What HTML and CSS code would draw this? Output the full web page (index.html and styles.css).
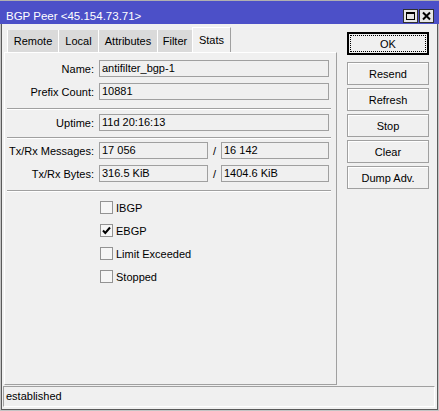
FILE: index.html
```html
<!DOCTYPE html>
<html>
<head>
<meta charset="utf-8">
<link rel="stylesheet" href="styles.css">
</head>
<body>
<div class="window">
  <div class="titlebar">
    <span class="title">BGP Peer &lt;45.154.73.71&gt;</span>
    <div class="tb-buttons">
      <span class="tb-btn"><svg width="13" height="12" viewBox="0 0 13 12"><rect x="2.5" y="2.5" width="8" height="7" fill="none" stroke="#000" stroke-width="1"/><rect x="2" y="2" width="9" height="2" fill="#000"/></svg></span>
      <span class="tb-btn"><svg width="13" height="12" viewBox="0 0 13 12"><path d="M3 2.5 L10 9.5 M10 2.5 L3 9.5" stroke="#000" stroke-width="2"/></svg></span>
    </div>
  </div>
  <div class="frame">
    <div class="content">
      <div class="main">
        <div class="tabs">
          <div class="tab tab-remote">Remote</div>
          <div class="tab tab-local">Local</div>
          <div class="tab tab-attr">Attributes</div>
          <div class="tab tab-filter">Filter</div>
          <div class="tab tab-active">Stats</div>
        </div>
        <div class="panel">
          <div class="row">
            <span class="lbl">Name:</span>
            <div class="field">antifilter_bgp-1</div>
          </div>
          <div class="row">
            <span class="lbl">Prefix Count:</span>
            <div class="field">10881</div>
          </div>
          <div class="sep"></div>
          <div class="row row-after-sep">
            <span class="lbl">Uptime:</span>
            <div class="field">11d 20:16:13</div>
          </div>
          <div class="sep sep-2"></div>
          <div class="row row-after-sep2">
            <span class="lbl">Tx/Rx Messages:</span>
            <div class="field field-a">17 056</div>
            <span class="slash">/</span>
            <div class="field field-b">16 142</div>
          </div>
          <div class="row">
            <span class="lbl">Tx/Rx Bytes:</span>
            <div class="field field-a">316.5 KiB</div>
            <span class="slash">/</span>
            <div class="field field-b">1404.6 KiB</div>
          </div>
          <div class="sep sep-3"></div>
          <div class="checks">
            <div class="check"><span class="box"></span>IBGP</div>
            <div class="check"><span class="box"><svg width="11" height="11" viewBox="0 0 11 11"><path d="M2 5.5 L4.3 8 L9 2.5" fill="none" stroke="#000" stroke-width="2"/></svg></span>EBGP</div>
            <div class="check"><span class="box"></span>Limit Exceeded</div>
            <div class="check"><span class="box"></span>Stopped</div>
          </div>
        </div>
      </div>
      <div class="side">
        <button class="btn btn-default"><span class="focus">OK</span></button>
        <button class="btn btn-first">Resend</button>
        <button class="btn">Refresh</button>
        <button class="btn">Stop</button>
        <button class="btn">Clear</button>
        <button class="btn">Dump Adv.</button>
      </div>
    </div>
    <div class="status">established</div>
  </div>
</div>
</body>
</html>
```
FILE: styles.css
```css
* { box-sizing: border-box; }
html, body {
  margin: 0;
  padding: 0;
  background: #f0f0f0;
}
body {
  font-family: "Liberation Sans", Arial, sans-serif;
  font-size: 11px;
  color: #000;
}
.window {
  width: 439px;
  height: 411px;
  display: flex;
  flex-direction: column;
  background: #f0f0f0;
}
.titlebar {
  height: 24px;
  flex: none;
  background: #4c50c8;
  border-top: 1px solid #b0b0b0;
  padding: 6px 5px 0 6px;
  display: flex;
  align-items: center;
  justify-content: space-between;
}
.title {
  color: #fff;
  font-size: 11.5px;
}
.tb-buttons {
  display: flex;
  gap: 1px;
}
.tb-btn {
  width: 15px;
  height: 14px;
  background: #e6e6e6;
  border: 1px solid #303030;
  display: flex;
  align-items: center;
  justify-content: center;
}
.tb-btn svg { display: block; }
.frame {
  flex: 1;
  border: 1px solid #c4c4c4;
  border-top: 0;
  box-shadow: inset 1px 0 #5a5a5a, inset -1px 0 #5a5a5a, inset 0 -1px #5a5a5a;
  padding: 3px 3px 3px 3px;
  display: flex;
  flex-direction: column;
}
.content {
  display: flex;
}
.main {
  width: 333px;
}
.tabs {
  height: 25px;
  display: flex;
  align-items: flex-end;
  padding-left: 3px;
}
.tab {
  height: 22px;
  line-height: 23px;
  border-left: 1px solid #fff;
  background: #dadada;
  text-align: center;
}
.tab-remote { width: 51px; }
.tab-local { width: 40px; }
.tab-attr { width: 59px; }
.tab-filter { width: 35px; }
.tab-active {
  width: 39px;
  height: 25px;
  line-height: 24px;
  background: #f0f0f0;
  border-top: 1px solid #fff;
  border-right: 1px solid #a0a0a0;
}
.panel {
  height: 333px;
  border-top: 1px solid #fff;
  border-left: 1px solid #fff;
  border-right: 1px solid #a0a0a0;
  border-bottom: 1px solid #a0a0a0;
  padding-top: 7px;
}
.row {
  display: flex;
  align-items: center;
  height: 17px;
}
.row + .row { margin-top: 6px; }
.row-after-sep { margin-top: 4px; }
.row-after-sep2 { margin-top: 3px; }
.lbl {
  width: 89px;
  margin-right: 5px;
  text-align: right;
  white-space: nowrap;
}
.field {
  width: 230px;
  height: 17px;
  line-height: 15px;
  border: 1px solid #a0a0a0;
  padding-left: 2px;
  white-space: nowrap;
}
.field-a { width: 109px; }
.field-b { width: 108px; }
.slash {
  width: 13px;
  text-align: center;
}
.sep {
  margin: 8px 5px 0 2px;
  border-top: 1px solid #a0a0a0;
  border-bottom: 1px solid #fff;
}
.sep-2 { margin-top: 6px; }
.sep-3 { margin-top: 8px; }
.checks {
  margin-top: 4px;
}
.check {
  height: 23px;
  display: flex;
  align-items: center;
  padding-left: 95px;
}
.box {
  width: 13px;
  height: 13px;
  border: 1px solid #939393;
  background: #f6f6f6;
  margin-right: 3px;
  display: flex;
  align-items: center;
  justify-content: center;
}
.box svg { display: block; }
.side {
  margin-left: 10px;
  padding-top: 5px;
  width: 82px;
  display: flex;
  flex-direction: column;
}
.btn {
  display: block;
  width: 82px;
  height: 23px;
  margin: 3px 0 0 0;
  padding: 0;
  border: 1px solid #a0a0a0;
  background: #f0f0f0;
  box-shadow: inset 1px 1px #fff;
  font-family: "Liberation Sans", Arial, sans-serif;
  font-size: 11px;
  color: #000;
  text-align: center;
}
.btn-default {
  margin-top: 0;
  border: 2px solid #000;
  box-shadow: none;
  padding: 1px;
}
.focus {
  display: flex;
  align-items: center;
  justify-content: center;
  height: 100%;
  border: 1px dotted #000;
}
.btn-first { margin-top: 7px; }
.status {
  margin: 1px 0 0 -1px;
  height: 21px;
  border-top: 1px solid #a0a0a0;
  border-left: 1px solid #a0a0a0;
  border-right: 1px solid #fff;
  border-bottom: 1px solid #fff;
  padding-left: 2px;
  line-height: 19px;
}
```
